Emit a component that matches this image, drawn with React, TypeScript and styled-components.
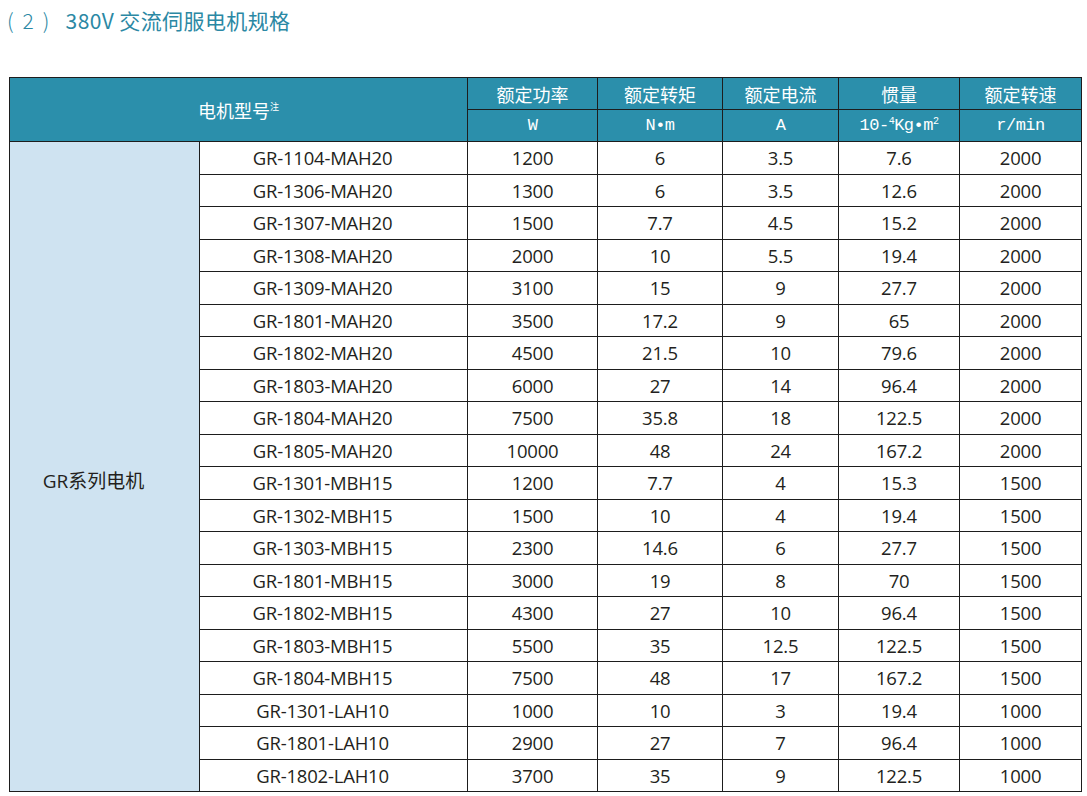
import React from "react";
import styled, { createGlobalStyle } from "styled-components";

const GlobalStyle = createGlobalStyle`
  html, body {
    margin: 0;
    padding: 0;
    background: #ffffff;
  }
  body {
    font-family: "Open Sans", "Noto Sans CJK SC", sans-serif;
  }
`;

const Page = styled.div`
  padding: 0 0 0 9px;
  width: 1087px;
  box-sizing: border-box;
`;

const Title = styled.h2`
  margin: 0 0 0 -2px;
  height: 40px;
  line-height: 40px;
  font-family: "Noto Sans CJK SC", "Noto Sans", sans-serif;
  font-weight: 400;
  font-size: 21px;
  letter-spacing: 0.4px;
  color: #2b88a4;
  white-space: pre;
`;

const Index = styled.span`
  font-weight: 300;
  letter-spacing: 9px;
  margin-right: 2px;
`;

const Table = styled.table`
  margin-top: 37px;
  width: 1073px;
  border-collapse: collapse;
  table-layout: fixed;
  color: #231f20;
`;

const HeadRow = styled.tr`
  height: 32px;
`;

const BodyRow = styled.tr`
  height: 32.5px;
`;

const HeadCell = styled.th`
  border: 1px solid #1d1d1d;
  background: #2b8fab;
  color: #ffffff;
  font-family: "Noto Sans CJK SC", sans-serif;
  font-weight: 400;
  font-size: 18px;
  padding: 0;
  text-align: center;
  vertical-align: middle;
  sup {
    font-size: 9px;
    vertical-align: 8px;
  }
`;

const UnitCell = styled(HeadCell)`
  font-family: "Liberation Mono", "Noto Sans CJK SC", monospace;
  font-size: 17px;
  letter-spacing: -0.5px;
  sup {
    font-size: 10px;
    vertical-align: 6px;
  }
`;

const SeriesCell = styled.td`
  border: 1px solid #1d1d1d;
  background: #cfe3f1;
  font-size: 19px;
  padding: 26px 22px 0 0;
  text-align: center;
  vertical-align: middle;
`;

const DataCell = styled.td<{ $shift?: boolean }>`
  border: 1px solid #1d1d1d;
  font-size: 18.5px;
  padding: 0 ${(p) => (p.$shift ? "22px" : "0")} 0 0;
  text-align: center;
  vertical-align: middle;
  white-space: nowrap;
  letter-spacing: -0.2px;
`;

const columns = [
  { name: "额定功率", unit: <>W</> },
  { name: "额定转矩", unit: <>N•m</> },
  { name: "额定电流", unit: <>A</> },
  {
    name: "惯量",
    unit: (
      <>
        10-<sup>4</sup>Kg•m<sup>2</sup>
      </>
    ),
  },
  { name: "额定转速", unit: <>r/min</> },
];

const rows: [string, string, string, string, string, string][] = [
  ["GR-1104-MAH20", "1200", "6", "3.5", "7.6", "2000"],
  ["GR-1306-MAH20", "1300", "6", "3.5", "12.6", "2000"],
  ["GR-1307-MAH20", "1500", "7.7", "4.5", "15.2", "2000"],
  ["GR-1308-MAH20", "2000", "10", "5.5", "19.4", "2000"],
  ["GR-1309-MAH20", "3100", "15", "9", "27.7", "2000"],
  ["GR-1801-MAH20", "3500", "17.2", "9", "65", "2000"],
  ["GR-1802-MAH20", "4500", "21.5", "10", "79.6", "2000"],
  ["GR-1803-MAH20", "6000", "27", "14", "96.4", "2000"],
  ["GR-1804-MAH20", "7500", "35.8", "18", "122.5", "2000"],
  ["GR-1805-MAH20", "10000", "48", "24", "167.2", "2000"],
  ["GR-1301-MBH15", "1200", "7.7", "4", "15.3", "1500"],
  ["GR-1302-MBH15", "1500", "10", "4", "19.4", "1500"],
  ["GR-1303-MBH15", "2300", "14.6", "6", "27.7", "1500"],
  ["GR-1801-MBH15", "3000", "19", "8", "70", "1500"],
  ["GR-1802-MBH15", "4300", "27", "10", "96.4", "1500"],
  ["GR-1803-MBH15", "5500", "35", "12.5", "122.5", "1500"],
  ["GR-1804-MBH15", "7500", "48", "17", "167.2", "1500"],
  ["GR-1301-LAH10", "1000", "10", "3", "19.4", "1000"],
  ["GR-1801-LAH10", "2900", "27", "7", "96.4", "1000"],
  ["GR-1802-LAH10", "3700", "35", "9", "122.5", "1000"],
];

const widths = [190, 268, 130, 125, 116, 121, 122];

export default function App() {
  return (
    <>
      <GlobalStyle />
      <Page>
        <Title>
          <Index>(2)</Index> 380V 交流伺服电机规格
        </Title>
        <Table>
          <colgroup>
            {widths.map((w, i) => (
              <col key={i} style={{ width: w }} />
            ))}
          </colgroup>
          <thead>
            <HeadRow>
              <HeadCell colSpan={2} rowSpan={2}>
                电机型号<sup>注</sup>
              </HeadCell>
              {columns.map((c) => (
                <HeadCell key={c.name}>{c.name}</HeadCell>
              ))}
            </HeadRow>
            <HeadRow>
              {columns.map((c) => (
                <UnitCell key={c.name}>{c.unit}</UnitCell>
              ))}
            </HeadRow>
          </thead>
          <tbody>
            {rows.map((r, i) => (
              <BodyRow key={r[0]}>
                {i === 0 && (
                  <SeriesCell rowSpan={rows.length}>GR系列电机</SeriesCell>
                )}
                <DataCell $shift>{r[0]}</DataCell>
                {r.slice(1).map((v, j) => (
                  <DataCell key={j}>{v}</DataCell>
                ))}
              </BodyRow>
            ))}
          </tbody>
        </Table>
      </Page>
    </>
  );
}
